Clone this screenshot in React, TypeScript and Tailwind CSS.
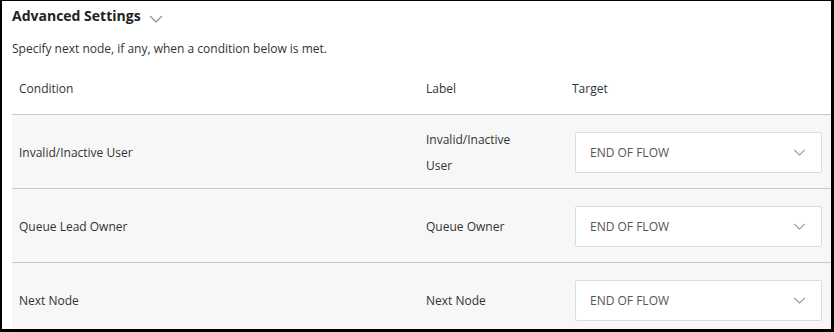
const rows = [
  { condition: 'Invalid/Inactive User', label: 'Invalid/Inactive User', target: 'END OF FLOW' },
  { condition: 'Queue Lead Owner', label: 'Queue Owner', target: 'END OF FLOW' },
  { condition: 'Next Node', label: 'Next Node', target: 'END OF FLOW' },
];

function Chevron({ className }: { className?: string }) {
  return (
    <svg viewBox="0 0 14 8" className={className} fill="none" stroke="currentColor" strokeWidth="1.2">
      <path d="M1 1l6 6 6-6" />
    </svg>
  );
}

export default function App() {
  return (
    <div
      className="w-[834px] h-[332px] bg-white border-black border-l-2 border-t border-r-[3px] border-b-[3px] overflow-hidden text-[#333]"
      style={{ fontFamily: '"Open Sans", "Liberation Sans", sans-serif' }}
    >
      <div className="pl-[10px] pt-[5px]">
        <div className="flex items-center gap-[8px] h-[19px]">
          <h3 className="text-[14px] font-bold text-[#222] leading-[19px]">Advanced Settings</h3>
          <Chevron className="w-[14px] h-[8px] mt-[6px] text-[#8a8f96]" />
        </div>
        <p className="text-[12px] leading-[18px] mt-[15px]">Specify next node, if any, when a condition below is met.</p>

        <div className="grid grid-cols-[407px_146px_1fr] pl-[7px] pt-[2px] mt-[20px] h-[36px] text-[12px] leading-[18px]">
          <span>Condition</span>
          <span>Label</span>
          <span>Target</span>
        </div>

        <div className="border-t border-[#c8c8c8]">
          {rows.map((r) => (
            <div
              key={r.condition}
              className="grid grid-cols-[407px_146px_1fr] items-center pl-[7px] pt-[2px] bg-[#f7f7f7] text-[12px] h-[74px] border-b border-[#c8c8c8]"
            >
              <span className="leading-[18px]">{r.condition}</span>
              <span className="leading-[26px] w-[100px]">{r.label}</span>
              <div className="ml-[3px] w-[247px] h-[41px] bg-white border border-[#dcdcdc] rounded-[2px] flex items-center justify-between pl-[14px] pr-[15px]">
                <span className="text-[12px] text-[#555]">{r.target}</span>
                <Chevron className="w-[13px] h-[7px] text-[#8a8f96]" />
              </div>
            </div>
          ))}
        </div>
      </div>
    </div>
  );
}
